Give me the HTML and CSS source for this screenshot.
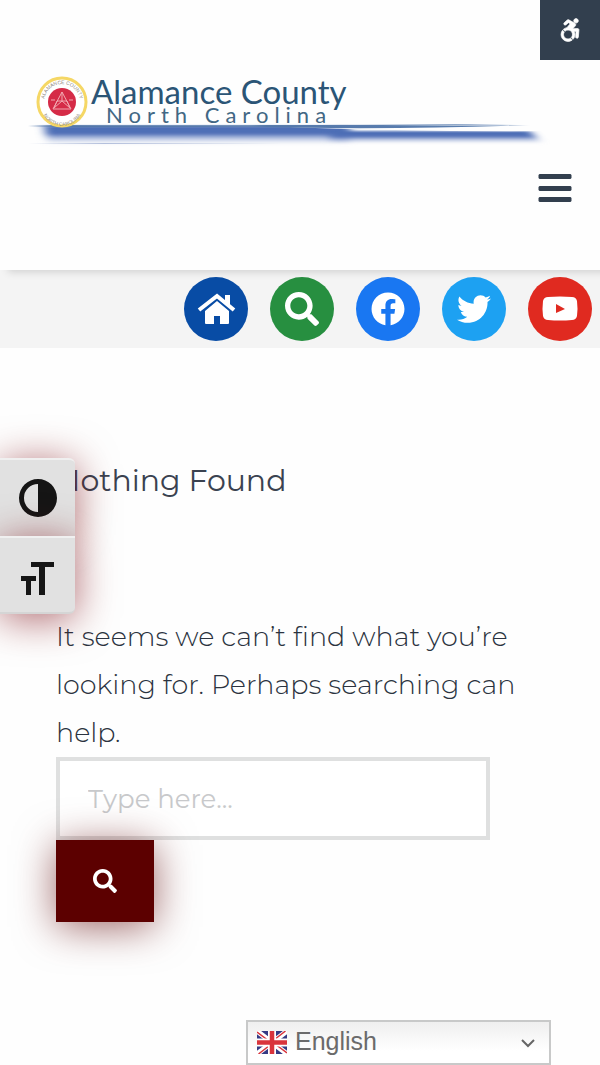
FILE: index.html
```html
<!DOCTYPE html>
<html lang="en">
<head>
  <meta charset="UTF-8" />
  <meta name="viewport" content="width=device-width, initial-scale=1.0" />
  <title>Nothing Found - Alamance County</title>
  <link rel="stylesheet" href="styles.css">
</head>
<body>
  <header class="site-header">
    <a class="logo" href="#" aria-label="Alamance County North Carolina">
      <svg viewBox="0 0 540 80" role="img">
        <defs>
          <linearGradient id="swoosh" x1="0" y1="0" x2="0" y2="1">
            <stop offset="0" stop-color="#4a6cb4" />
            <stop offset="0.4" stop-color="#5271b8" />
            <stop offset="1" stop-color="#c4cfe8" stop-opacity="0" />
          </linearGradient>
          <linearGradient id="fade" x1="0" y1="0" x2="1" y2="0">
            <stop offset="0" stop-color="#5377aa" stop-opacity="0" />
            <stop offset="0.06" stop-color="#5377aa" />
            <stop offset="0.9" stop-color="#5d80b0" />
            <stop offset="1" stop-color="#5377aa" stop-opacity="0" />
          </linearGradient>
          <linearGradient id="thin" x1="0" y1="0" x2="1" y2="0">
            <stop offset="0" stop-color="#b3bfdc" stop-opacity="0" />
            <stop offset="0.3" stop-color="#b3bfdc" />
            <stop offset="1" stop-color="#b3bfdc" stop-opacity="0" />
          </linearGradient>
          <filter id="soft" x="-5%" y="-30%" width="110%" height="160%">
            <feGaussianBlur stdDeviation="5 1" />
          </filter>
          <path id="sealTop" d="M24 37a18 18 0 0 1 36 0" />
          <path id="sealBottom" d="M21 40a21 21 0 0 0 42 0" />
        </defs>
        <path d="M24 61H330V80H28Z" fill="url(#swoosh)" filter="url(#soft)" />
        <path d="M310 66H510L522 79H310Z" fill="url(#swoosh)" filter="url(#soft)" />
        <path d="M270 61Q400 63 540 60V66Q390 67 270 62Z" fill="#fefefe" />
        <path d="M8 60Q260 61 500 59Q250 63 8 62Z" fill="url(#fade)" />
        <path d="M230 60Q380 61 512 60Q380 65 230 62Z" fill="url(#fade)" />
        <path d="M8 78H262V79H8Z" fill="url(#thin)" />
        <circle cx="42" cy="37" r="24" fill="#fff" stroke="#f5d765" stroke-width="3" />
        <circle cx="42" cy="37" r="14" fill="#d52b47" />
        <g fill="none" stroke="#f2a8b0">
          <path d="M42 27L33 44H51ZM42 27V36M37 36H47L50 43L42 36L34 43Z" />
          <path d="M31 35H35M49 35H53" />
        </g>
        <g class="seal-text">
          <text><textPath href="#sealTop" startOffset="50%">ALAMANCE  COUNTY</textPath></text>
          <text><textPath href="#sealBottom" startOffset="50%">NORTH  CAROLINA</textPath></text>
        </g>
        <text class="logo-name" x="71" y="39">Alamance County</text>
        <text class="logo-state" x="86" y="58">North Carolina</text>
      </svg>
    </a>
    <button class="menu-toggle" type="button" aria-label="Menu">
      <svg viewBox="0 0 33 30"><path d="M1 1h31l1 1v3l-1 1H1L0 5V2zM1 13h31l1 1v3l-1 1H1l-1-1v-3zM1 24h31l1 1v3l-1 1H1l-1-1v-3z" /></svg>
    </button>
  </header>

  <nav class="social-bar" aria-label="Quick links">
    <a class="social home" href="#" aria-label="Home">
      <svg viewBox="-3 0 38 32"><path d="M-1 17L17 3L34 17" fill="none" stroke="#fff" stroke-width="4" /><path d="M25 2h5v11l-5-4zM17 8L29 18v12q0 1-1 1h-8v-8h-6v8H6q-1 0-1-1V18z" /></svg>
    </a>
    <a class="social search" href="#" aria-label="Search">
      <svg viewBox="0 0 512 512"><path d="M505 442.700L405.300 343c-4.500-4.500-10.600-7-17-7H372c27.600-35.300 44-79.700 44-128C416 93.100 322.900 0 208 0S0 93.100 0 208s93.100 208 208 208c48.300 0 92.700-16.400 128-44v16.300c0 6.400 2.500 12.500 7 17l99.700 99.700c9.400 9.400 24.600 9.400 33.900 0l28.300-28.300c9.400-9.400 9.400-24.600.1-34zM208 336c-70.700 0-128-57.200-128-128 0-70.700 57.200-128 128-128 70.700 0 128 57.200 128 128 0 70.700-57.200 128-128 128z" /></svg>
    </a>
    <a class="social facebook" href="#" aria-label="Facebook">
      <svg viewBox="0 0 512 512"><path d="M504 256C504 119 393 8 256 8S8 119 8 256c0 123.780 90.690 226.380 209.250 245V327.690h-63V256h63v-54.640c0-62.150 37-96.480 93.670-96.480 27.140 0 55.520 4.840 55.520 4.840v61h-31.280c-30.800 0-40.410 19.120-40.410 38.730V256h68.780l-11 71.690h-57.780V501C413.310 482.380 504 379.780 504 256z" /></svg>
    </a>
    <a class="social twitter" href="#" aria-label="Twitter">
      <svg viewBox="0 0 512 512"><path d="M459.370 151.716c.325 4.548.325 9.097.325 13.645 0 138.720-105.583 298.558-298.558 298.558-59.452 0-114.680-17.219-161.137-47.106 8.447.974 16.568 1.299 25.340 1.299 49.055 0 94.213-16.568 130.274-44.832-46.132-.975-84.792-31.188-98.112-72.772 6.498.974 12.995 1.624 19.818 1.624 9.421 0 18.843-1.300 27.614-3.573-48.081-9.747-84.143-51.980-84.143-102.985v-1.299c13.969 7.797 30.214 12.670 47.431 13.319-28.264-18.843-46.781-51.005-46.781-87.391 0-19.492 5.197-37.360 14.294-52.954 51.655 63.675 129.300 105.258 216.365 109.807-1.624-7.797-2.599-15.918-2.599-24.040 0-57.828 46.782-104.934 104.934-104.934 30.213 0 57.502 12.670 76.670 33.137 23.715-4.548 46.456-13.320 66.599-25.340-7.798 24.366-24.366 44.833-46.132 57.827 21.117-2.273 41.584-8.122 60.426-16.243-14.292 20.791-32.161 39.308-52.628 54.253z" /></svg>
    </a>
    <a class="social youtube" href="#" aria-label="YouTube">
      <svg viewBox="0 0 34 34"><path fill-rule="evenodd" d="M5 5Q17 4 29 5Q33 5 34 9Q35 17 34 24Q33 28 29 28Q17 29 5 28Q1 28 0 24Q-1 17 0 9Q1 5 5 5ZM13 12V21L22 17Z" /></svg>
    </a>
  </nav>

  <main class="content">
    <h1>Nothing Found</h1>
    <p>It seems we can’t find what you’re looking for. Perhaps searching can help.</p>
    <form class="search-form" role="search">
      <input type="search" placeholder="Type here..." aria-label="Search for" />
      <button type="submit" aria-label="Search">
        <svg viewBox="0 0 512 512"><path d="M505 442.700L405.300 343c-4.500-4.500-10.600-7-17-7H372c27.600-35.300 44-79.700 44-128C416 93.100 322.900 0 208 0S0 93.100 0 208s93.100 208 208 208c48.300 0 92.700-16.400 128-44v16.300c0 6.400 2.500 12.500 7 17l99.700 99.700c9.400 9.400 24.600 9.400 33.900 0l28.300-28.300c9.400-9.400 9.400-24.600.1-34zM208 336c-70.700 0-128-57.200-128-128 0-70.700 57.200-128 128-128 70.700 0 128 57.200 128 128 0 70.700-57.200 128-128 128z" /></svg>
      </button>
    </form>
  </main>

  <button class="access-button" type="button" aria-label="Accessibility tools">
    <svg viewBox="0 0 448 512"><path stroke="#fff" stroke-width="16" d="M423.900 255.800L411 413.100c-3.300 40.700-63.900 35.100-60.600-4.900l10-122.500-41.100 2.300c10.100 20.700 15.800 43.900 15.800 68.500 0 41.200-16.100 78.700-42.300 106.500l-39.300-39.300c57.900-63.700 13.100-167.200-74-167.200-25.900 0-49.500 9.900-67.200 26L73 243.200c22-20.700 50.100-35.100 81.400-40.200l75.300-85.700-42.600-24.800-51.600 46c-30 26.800-70.600-18.500-40.500-45.400l68-60.700c9.800-8.800 24.100-10.200 35.500-3.600 0 0 139.300 80.900 139.500 81.100 16.200 10.100 20.700 36 6.100 52.600L285.700 229l106.100-5.900c18.500-1.100 33.600 14.400 32.100 32.700zm-64.900-154c28.100 0 50.900-22.800 50.900-50.900C409.900 22.800 387.100 0 359 0c-28.100 0-50.900 22.800-50.900 50.900 0 28.100 22.800 50.900 50.900 50.900zM179.600 456.500c-80.600 0-127.400-90.600-82.700-156.100l-39.700-39.700C36.400 287 24 320.300 24 356.400c0 130.700 150.700 201.400 251.400 122.500l-39.700-39.700c-16 10.900-35.300 17.300-56.100 17.300z" /></svg>
  </button>

  <div class="a11y-toolbar">
    <button type="button" aria-label="Toggle High Contrast">
      <svg viewBox="0 0 38 38"><path fill-rule="evenodd" d="M19 0a19 19 0 0 1 0 38a19 19 0 0 1 0-38zM19 5a14 14 0 0 0 0 28z" /></svg>
    </button>
    <button type="button" aria-label="Toggle Font size">
      <svg viewBox="0 0 38 38"><path d="M12 6h23v5h-9v28h-6V11h-8zM2 20h15v5h-5v14H7V25H2z" /></svg>
    </button>
  </div>

  <div class="language">
    <svg class="flag" viewBox="0 0 60 46" aria-hidden="true">
      <path fill="#353a84" d="M0 0h60v46H0z" />
      <path stroke="#fff" stroke-width="10" d="M0 0L60 46M60 0L0 46" />
      <path stroke="#d9343c" stroke-width="3" d="M0 2L28 23M60 44L32 23M57 0L30 21M3 46L30 25" />
      <path stroke="#fff" stroke-width="16" d="M30 0V46M0 23H60" />
      <path stroke="#d9343c" stroke-width="9" d="M30 0V46M0 23H60" />
    </svg>
    <select aria-label="Language">
      <option>English</option>
      <option>Español</option>
    </select>
    <svg class="arrow" viewBox="0 0 14 8" aria-hidden="true"><path d="M1 1L7 7L13 1" /></svg>
  </div>
</body>
</html>
```
FILE: styles.css
```css
* {
  box-sizing: border-box;
}
body {
  margin: 0;
  min-height: 100vh;
  font-family: Montserrat, Inter, sans-serif;
  color: #3a4250;
  background: #fefefe;
}
svg {
  display: block;
  overflow: visible;
}
button {
  border: 0;
  padding: 0;
  cursor: pointer;
}
.site-header {
  position: relative;
  display: flex;
  flex-direction: column;
  padding: 65px 28px 67px 20px;
  background: #fefefe;
  box-shadow: 8px 2px 8px rgba(0, 0, 0, 0.15);
}
.logo {
  width: 98%;
  max-width: 540px;
}
.logo-name {
  font: 33px Lato, sans-serif;
  fill: #2b5576;
}
.logo-state {
  font: 22px Lato, sans-serif;
  letter-spacing: 6px;
  fill: #426784;
}
.seal-text {
  font: 5px "Liberation Sans", sans-serif;
  text-anchor: middle;
  fill: #8d8780;
}
.menu-toggle {
  align-self: flex-end;
  margin-top: 28px;
  background: none;
}
.menu-toggle svg {
  width: 34px;
  height: 30px;
  fill: #323f4e;
}
.social-bar {
  display: flex;
  justify-content: flex-end;
  gap: 22px;
  padding: 7px 8px;
  background: #f4f4f4;
}
.social {
  display: flex;
  align-items: center;
  justify-content: center;
  width: 64px;
  height: 64px;
  border-radius: 50%;
}
.social svg {
  width: 34px;
  height: 34px;
  fill: #fff;
}
.home {
  background: #084ca5;
}
.home svg {
  width: 38px;
}
.search {
  background: #278f40;
}
.facebook {
  background: #1977f2;
}
.twitter {
  background: #1da1f2;
}
.youtube {
  background: #e02a20;
}
.content {
  padding: 109px 56px 142px;
}
h1 {
  margin: 0;
  font-size: 30px;
  font-weight: 400;
  line-height: 48px;
}
p {
  margin: 108px 0 0;
  font-size: 27px;
  font-weight: 300;
  line-height: 48px;
  color: #2b3340;
}
.search-form {
  display: flex;
  flex-direction: column;
  align-items: flex-start;
}
.search-form input {
  width: 89%;
  height: 83px;
  padding: 0 28px;
  border: 4px solid #dfe0e0;
  border-radius: 0;
  font: 26px Montserrat, Inter, sans-serif;
  background: #fff;
  appearance: none;
}
.search-form input::placeholder {
  color: #c8c9cb;
}
.search-form button {
  display: flex;
  align-items: center;
  justify-content: center;
  width: 98px;
  height: 82px;
  background: #5c0000;
  box-shadow: 0 5px 40px rgba(92, 0, 0, 0.6);
}
.search-form button svg {
  width: 24px;
  height: 24px;
  fill: #fff;
}
.access-button {
  position: fixed;
  top: 0;
  right: 0;
  display: flex;
  align-items: center;
  justify-content: center;
  width: 60px;
  height: 60px;
  background: #323f4e;
}
.access-button svg {
  width: 20px;
  height: 24px;
  fill: #fff;
}
.a11y-toolbar {
  position: fixed;
  top: 458px;
  left: 0;
  width: 75px;
}
.a11y-toolbar button {
  display: flex;
  align-items: center;
  justify-content: center;
  width: 100%;
  height: 78px;
  border-top: 2px solid #f0f0f0;
  border-radius: 0 6px 0 0;
  background: #e1e1e1;
  box-shadow: 0 5px 40px rgba(120, 0, 10, 0.6);
}
.a11y-toolbar button:last-child {
  position: relative;
  border-bottom: 2px solid #d5d5d5;
  border-radius: 0 0 6px 0;
}
.a11y-toolbar svg {
  width: 38px;
  height: 38px;
  fill: #151515;
}
.language {
  position: fixed;
  right: 49px;
  bottom: 0;
  display: grid;
  align-items: center;
  width: 305px;
}
.language > * {
  grid-area: 1 / 1;
}
.language select {
  width: 100%;
  height: 45px;
  padding: 0 40px 4px 47px;
  border: 2px solid #c8c9c9;
  border-radius: 0;
  font: 25px "Liberation Sans", Arial, sans-serif;
  color: #6b6b6b;
  background: linear-gradient(#efefef, #fff 70%);
  appearance: none;
}
.flag {
  z-index: 1;
  width: 30px;
  height: 23px;
  margin-left: 11px;
  overflow: hidden;
  pointer-events: none;
}
.arrow {
  z-index: 1;
  justify-self: end;
  width: 14px;
  height: 8px;
  margin-right: 16px;
  fill: none;
  stroke: #666;
  stroke-width: 2;
  pointer-events: none;
}
```
